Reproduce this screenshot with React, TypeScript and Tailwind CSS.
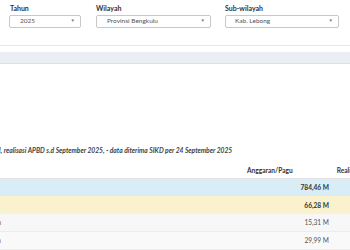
import React from "react";

const font = { fontFamily: "Lato, 'Open Sans', sans-serif" };

function Select({ w, value, textPl }: { w: string; value: string; textPl: string }) {
  return (
    <div className={`${w} h-[13px] border border-[#c8c8c8] rounded-[2px] bg-white flex items-center justify-between pr-[5px]`}>
      <span className={`${textPl} text-[6.5px] text-[#555] leading-none`}>{value}</span>
      <span className="text-[4.5px] text-[#777] leading-none">▼</span>
    </div>
  );
}

export default function App() {
  return (
    <div className="w-[350px] h-[250px] overflow-hidden bg-white" style={font}>
      <div className="flex pt-[4px]">
        <div className="ml-[9px] w-[72px] flex flex-col">
          <span className="pl-[1px] text-[7px] font-bold text-[#333] leading-[8px] h-[11px]">Tahun</span>
          <Select w="w-[72px]" value="2025" textPl="pl-[10px]" />
        </div>
        <div className="ml-[15px] w-[115px] flex flex-col">
          <span className="text-[7px] font-bold text-[#333] leading-[8px] h-[11px]">Wilayah</span>
          <Select w="w-[115px]" value="Provinsi Bengkulu" textPl="pl-[10px]" />
        </div>
        <div className="ml-[14px] w-[114px] flex flex-col">
          <span className="text-[7px] font-bold text-[#333] leading-[8px] h-[11px]">Sub-wilayah</span>
          <Select w="w-[114px]" value="Kab. Lebong" textPl="pl-[9px]" />
        </div>
      </div>
      <div className="mt-[17px] h-px bg-[#e6e6e6]" />
      <div className="mt-[6px] h-[12px] bg-[#eaedf2] border-b border-[#dcdfe4]" />
      <div className="mt-[81px] h-[10px] flex items-center whitespace-nowrap">
        <span className="-ml-[1px] text-[6.7px] italic font-bold text-[#444] leading-none">
          l, realisasi APBD s.d September 2025, - data diterima SIKD per 24 September 2025
        </span>
      </div>
      <div className="mt-[8px] h-[16px] flex items-center whitespace-nowrap border-b border-[#e3e3e3]">
        <span className="ml-[247px] text-[6.6px] font-bold text-[#333] leading-none">Anggaran/Pagu</span>
        <span className="ml-[44px] text-[6.6px] font-bold text-[#333] leading-none">Realisasi</span>
      </div>
      <div className="h-[17px] bg-[#d9edf7] flex items-center justify-end pr-[21px]">
        <span className="text-[6.6px] font-bold text-[#333] leading-none">784,46 M</span>
      </div>
      <div className="h-[18px] bg-[#faf1cf] flex items-center justify-end pr-[21px]">
        <span className="text-[6.6px] font-bold text-[#333] leading-none">66,28 M</span>
      </div>
      <div className="h-[18px] bg-[#f7f7f7] border-b border-[#ececec] flex items-center whitespace-nowrap">
        <span className="-ml-[33px] text-[6.6px] text-[#9a5a2e] leading-none">Pendapatan</span>
        <span className="ml-auto mr-[21px] text-[6.6px] text-[#555] leading-none">15,31 M</span>
      </div>
      <div className="h-[18px] bg-[#f9f9f9] border-b border-[#ececec] flex items-center whitespace-nowrap">
        <span className="-ml-[20px] text-[6.6px] text-[#9a5a2e] leading-none">Daerah</span>
        <span className="ml-auto mr-[21px] text-[6.6px] text-[#555] leading-none">29,99 M</span>
      </div>
    </div>
  );
}
